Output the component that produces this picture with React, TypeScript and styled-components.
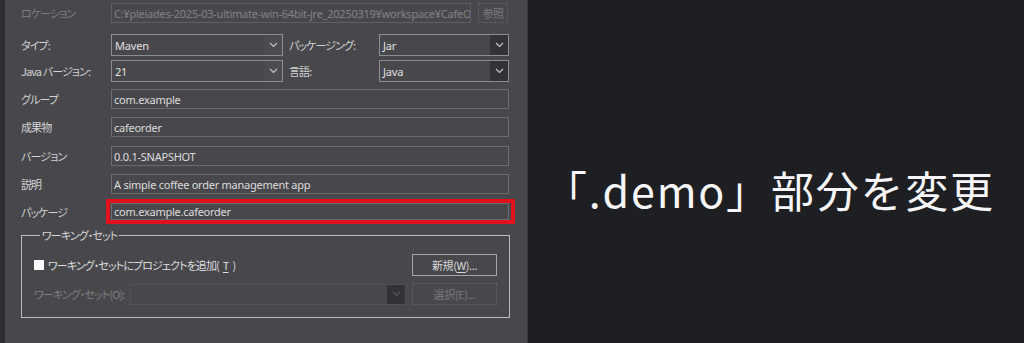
import { styled, createGlobalStyle } from 'styled-components'

const GlobalStyle = createGlobalStyle`
  html, body {
    margin: 0;
    padding: 0;
    background: #1e1f22;
  }
  body {
    font-family: 'Noto Sans', 'Noto Sans CJK JP', sans-serif;
  }
`

const Page = styled.div`
  display: flex;
  width: 1024px;
  height: 343px;
  overflow: hidden;
  background: #1e1f22;
`

const Dialog = styled.div`
  box-sizing: border-box;
  width: 528px;
  height: 343px;
  flex: none;
  display: flex;
  flex-direction: column;
  padding: 3px 0 0 16px;
  background: #48484c;
  border-left: 5px solid #2d2d30;
  border-right: 1px solid #38383b;
`

const Row = styled.div<{ $top: number; $h: number }>`
  display: flex;
  align-items: center;
  height: ${(p) => p.$h}px;
  margin-top: ${(p) => p.$top}px;
`

const Label = styled.span<{ $w?: number; $gap?: number; $disabled?: boolean }>`
  flex: none;
  width: ${(p) => p.$w ?? 90}px;
  margin-left: ${(p) => p.$gap ?? 0}px;
  font-family: 'Noto Sans CJK JP', sans-serif;
  font-feature-settings: 'palt';
  font-size: 11px;
  letter-spacing: -0.9px;
  color: ${(p) => (p.$disabled ? '#7d7d80' : '#d2d2d4')};
  white-space: nowrap;
`

const TextField = styled.div<{ $w: number; $disabled?: boolean }>`
  box-sizing: border-box;
  flex: none;
  width: ${(p) => p.$w}px;
  height: 100%;
  display: flex;
  align-items: center;
  padding: 0 2px;
  overflow: hidden;
  white-space: nowrap;
  border: 1px solid ${(p) => (p.$disabled ? '#606064' : '#6c6c70')};
  background: #48484c;
  font-family: 'Noto Sans', 'Noto Sans CJK JP', sans-serif;
  font-size: 11px;
  letter-spacing: -0.25px;
  color: ${(p) => (p.$disabled ? '#828286' : '#dcdcde')};
`

const ComboBox = styled.div<{ $w: number; $disabled?: boolean }>`
  box-sizing: border-box;
  flex: none;
  width: ${(p) => p.$w}px;
  height: 100%;
  display: flex;
  align-items: stretch;
  border: 1px solid ${(p) => (p.$disabled ? '#5a5a5e' : '#8e8e92')};
  border-style: ${(p) => (p.$disabled ? 'dotted' : 'solid')};
  background: #48484c;
`

const ComboValue = styled.span`
  flex: 1;
  display: flex;
  align-items: center;
  padding: 0 3px;
  font-family: 'Noto Sans', sans-serif;
  font-size: 11px;
  letter-spacing: -0.2px;
  color: #e0e0e2;
`

const ComboArrow = styled.span<{ $dark?: boolean }>`
  flex: none;
  width: 18px;
  display: flex;
  align-items: center;
  justify-content: center;
  background: ${(p) => (p.$dark ? '#333337' : '#4c4c50')};
`

const Button = styled.div<{ $disabled?: boolean }>`
  box-sizing: border-box;
  flex: none;
  width: 85px;
  height: 22px;
  display: flex;
  align-items: center;
  justify-content: center;
  border: 1px ${(p) => (p.$disabled ? 'dotted #68686c' : 'solid #a4a4a8')};
  font-family: 'Noto Sans CJK JP', sans-serif;
  font-feature-settings: 'palt';
  font-size: 11px;
  letter-spacing: -0.4px;
  color: ${(p) => (p.$disabled ? '#7a7a7e' : '#d8d8da')};
  u {
    text-decoration-thickness: 1px;
    text-underline-offset: 2px;
  }
`

const BrowseButton = styled(Button)`
  width: 30px;
  height: 20px;
  margin-left: 7px;
`

const Highlight = styled.div`
  position: relative;
  display: flex;
  height: 100%;
  &::after {
    content: '';
    position: absolute;
    left: -5px;
    right: -6px;
    top: -4px;
    bottom: -4px;
    border: 4px solid #e3101d;
    pointer-events: none;
  }
`

const Group = styled.fieldset`
  box-sizing: border-box;
  width: 489px;
  margin: 7px 0 0 0;
  padding: 11px 12px 12px 12px;
  border: 1px solid #bcbcbf;
  display: grid;
  grid-template-columns: auto 1fr auto;
  row-gap: 7px;
  align-items: center;
`

const Legend = styled.legend`
  margin-left: 6px;
  padding: 0 2px;
  font-family: 'Noto Sans CJK JP', sans-serif;
  font-feature-settings: 'palt';
  font-size: 11px;
  letter-spacing: -0.9px;
  color: #d6d6d8;
`

const CheckRow = styled.label`
  grid-column: 1 / 3;
  display: flex;
  align-items: center;
  gap: 4px;
  font-family: 'Noto Sans CJK JP', sans-serif;
  font-feature-settings: 'palt';
  font-size: 11px;
  letter-spacing: -0.9px;
  color: #dcdcde;
  u {
    text-underline-offset: 2px;
  }
`

const CheckBox = styled.span`
  width: 10px;
  height: 10px;
  background: #fafafa;
`

const GroupField = styled.div`
  margin: 0 6px;
  height: 21px;
  display: flex;
`

const Caption = styled.div`
  flex: 1;
  padding: 168px 0 0 16px;
  font-family: 'Noto Sans CJK JP', sans-serif;
  font-size: 43px;
  line-height: 43px;
  letter-spacing: 1.8px;
  color: #f6f6f8;
  white-space: nowrap;
`

const Chevron = ({ color }: { color: string }) => (
  <svg width='9' height='6' viewBox='0 0 9 6'>
    <polyline points='1,1 4.5,4.5 8,1' fill='none' stroke={color} strokeWidth='1.2' />
  </svg>
)

type TComboProps = { w: number; value?: string; dark?: boolean; disabled?: boolean }

const Combo = ({ w, value, dark, disabled }: TComboProps) => (
  <ComboBox $w={w} $disabled={disabled}>
    <ComboValue>{value}</ComboValue>
    <ComboArrow $dark={dark}>
      <Chevron color={disabled ? '#55555a' : '#c4c4c8'} />
    </ComboArrow>
  </ComboBox>
)

const fields = [
  { label: 'グループ', value: 'com.example', top: 7 },
  { label: '成果物', value: 'cafeorder', top: 8 },
  { label: 'バージョン', value: '0.0.1-SNAPSHOT', top: 9 },
  { label: '説明', value: 'A simple coffee order management app', top: 8 },
]

export default function App() {
  return (
    <>
      <GlobalStyle />
      <Page>
        <Dialog>
          <Row $top={0} $h={20}>
            <Label $disabled>ロケーション</Label>
            <TextField $w={360} $disabled>
              C:¥pleiades-2025-03-ultimate-win-64bit-jre_20250319¥workspace¥CafeO
            </TextField>
            <BrowseButton $disabled>参照</BrowseButton>
          </Row>
          <Row $top={11} $h={22}>
            <Label>タイプ:</Label>
            <Combo w={172} value='Maven' />
            <Label $gap={6}>パッケージング:</Label>
            <Combo w={130} value='Jar' dark />
          </Row>
          <Row $top={4} $h={22}>
            <Label>Java バージョン:</Label>
            <Combo w={172} value='21' />
            <Label $gap={6}>言語:</Label>
            <Combo w={130} value='Java' dark />
          </Row>
          {fields.map((f) => (
            <Row key={f.label} $top={f.top} $h={20}>
              <Label>{f.label}</Label>
              <TextField $w={398}>{f.value}</TextField>
            </Row>
          ))}
          <Row $top={9} $h={17}>
            <Label>パッケージ</Label>
            <Highlight>
              <TextField $w={398}>com.example.cafeorder</TextField>
            </Highlight>
          </Row>
          <Group>
            <Legend>ワーキング・セット</Legend>
            <CheckRow>
              <CheckBox />
              ワーキング・セットにプロジェクトを追加(<u>T</u>)
            </CheckRow>
            <Button>
              新規(<u>W</u>)...
            </Button>
            <Label $w={90} $disabled>
              ワーキング・セット(O):
            </Label>
            <GroupField>
              <Combo w={276} dark disabled />
            </GroupField>
            <Button $disabled>選択(E)...</Button>
          </Group>
        </Dialog>
        <Caption>「.demo」部分を変更</Caption>
      </Page>
    </>
  )
}
